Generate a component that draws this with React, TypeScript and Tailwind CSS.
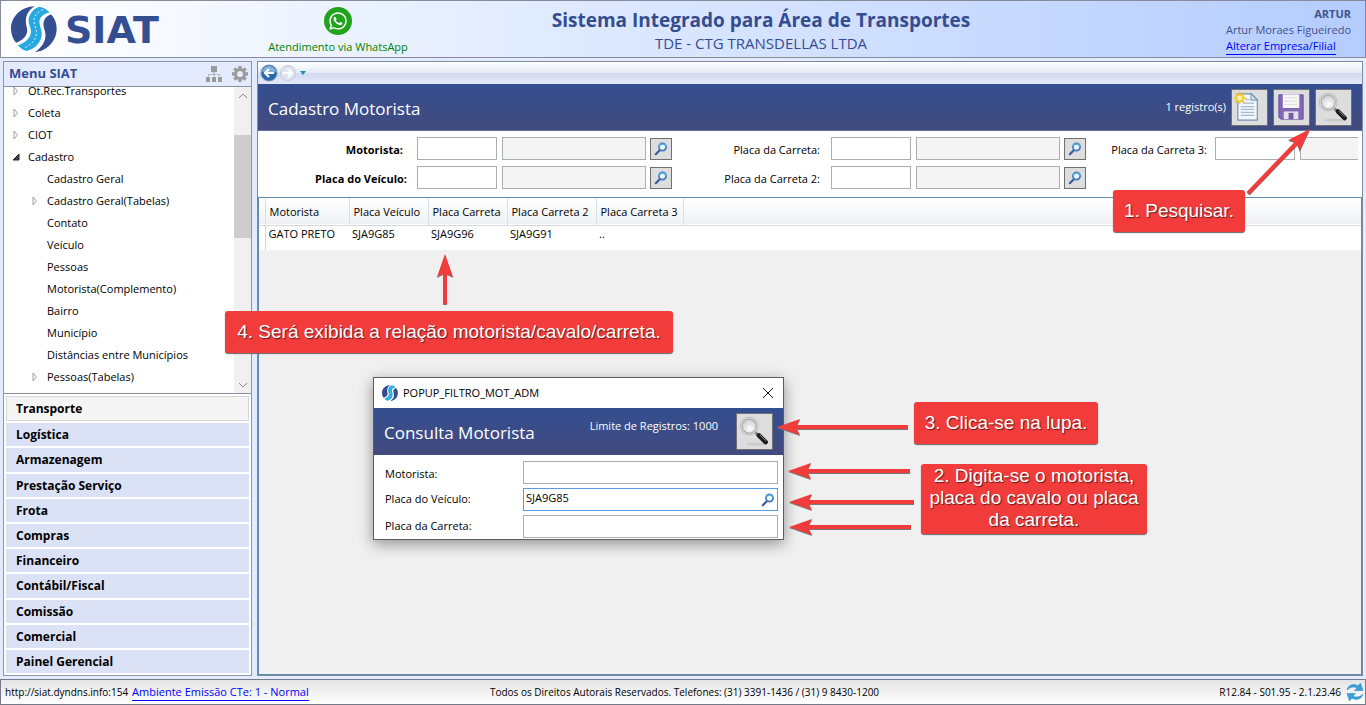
import { useState } from "react";
import { FaWhatsapp } from "react-icons/fa";

type TreeItem = { label: string; level: number; state?: "open" | "closed" };

const tree: TreeItem[] = [
  { label: "Ot.Rec.Transportes", level: 0, state: "closed" },
  { label: "Coleta", level: 0, state: "closed" },
  { label: "CIOT", level: 0, state: "closed" },
  { label: "Cadastro", level: 0, state: "open" },
  { label: "Cadastro Geral", level: 1 },
  { label: "Cadastro Geral(Tabelas)", level: 1, state: "closed" },
  { label: "Contato", level: 1 },
  { label: "Veículo", level: 1 },
  { label: "Pessoas", level: 1 },
  { label: "Motorista(Complemento)", level: 1 },
  { label: "Bairro", level: 1 },
  { label: "Município", level: 1 },
  { label: "Distâncias entre Municípios", level: 1 },
  { label: "Pessoas(Tabelas)", level: 1, state: "closed" },
];

const modulos = [
  "Transporte",
  "Logística",
  "Armazenagem",
  "Prestação Serviço",
  "Frota",
  "Compras",
  "Financeiro",
  "Contábil/Fiscal",
  "Comissão",
  "Comercial",
  "Painel Gerencial",
];

function LogoMark({ className }: { className: string }) {
  return (
    <svg viewBox="0 0 136 136" className={className} aria-hidden="true">
      <path d="M70 1C30 2 0 32 0 67c0 17 6 31 15 42 20-8 33-20 33-37 0-10-5-16-4-29C45 25 54 10 70 1z" fill="#344e92" />
      <path d="M83 2c13 2 24 9 31 17-18 4-30 14-30 28 0 12 8 22 7 37-2 24-20 42-45 49-11-4-19-9-26-17 22-6 39-21 39-41 0-13-8-20-7-34C53 24 66 8 83 2z" fill="#27aae1" />
      <path d="M119 25c10 11 16 25 16 42 0 37-29 66-64 69 18-12 30-28 31-48 0-15-7-24-6-36 1-14 9-23 23-27z" fill="#344e92" />
      <path d="M94 11C77 18 67 30 68 46c1 13 8 19 7 35-2 21-17 36-38 44" fill="none" stroke="#fff" strokeWidth="2.500" strokeDasharray="6 6" />
    </svg>
  );
}

function LupaAzul() {
  return (
    <svg viewBox="0 0 14 14" className="h-3.5 w-3.5" aria-hidden="true">
      <path d="M5.800 8.200L1.800 12.200" stroke="#3c5aa0" strokeWidth="2.200" strokeLinecap="round" />
      <circle cx="8.500" cy="5" r="3.600" fill="#eef6fc" stroke="#3d78c0" strokeWidth="1.700" />
      <path d="M5 4.800a3.600 3.600 0 0 1 7 0" fill="none" stroke="#4fb0dc" strokeWidth="1.600" />
    </svg>
  );
}

function LupaCinza() {
  return (
    <svg viewBox="0 0 36 36" className="h-full w-full" aria-hidden="true">
      <defs>
        <radialGradient id="lente" cx="55%" cy="65%">
          <stop offset="0" stopColor="#fff" />
          <stop offset="1" stopColor="#d3d3d3" />
        </radialGradient>
      </defs>
      <ellipse cx="20" cy="31" rx="11" ry="1.500" fill="#cbcbcb" />
      <path d="M18.500 18.500l4 4" stroke="#8a8a8a" strokeWidth="3" />
      <path d="M22.500 22l7 7" stroke="#1d1d1d" strokeWidth="4.600" strokeLinecap="round" />
      <path d="M23.500 21.500l6 6" stroke="#8d8d8d" strokeWidth="1" />
      <circle cx="12.500" cy="12.500" r="8" fill="url(#lente)" stroke="#a5a5a5" strokeWidth="2.600" />
      <circle cx="12.500" cy="12.500" r="8.300" fill="none" stroke="#d9d9d9" strokeWidth="1.200" />
    </svg>
  );
}

function IconeNovo() {
  return (
    <svg viewBox="0 0 36 36" className="h-full w-full" aria-hidden="true">
      <path d="M6 4h14l6 6v21H6z" fill="#f2f7fc" stroke="#6e92b5" strokeWidth="1.200" />
      <path d="M19.500 4v6.500H26z" fill="#d2e1ef" stroke="#6e92b5" />
      <path d="M14 10h4M11 13.500h12M9 17h14M9 20h14M9 23h14M9 26h14" stroke="#a3bad0" strokeWidth="1.300" />
      <path d="M8 1.500l1.300 3.600 3.600-1.700-1.700 3.600L15 8.300l-3.800 1.300 1.700 3.600-3.600-1.700L8 15l-1.300-3.500-3.600 1.700 1.700-3.600L1.500 8.300 4.800 7 3.100 3.400l3.600 1.700z" fill="#f7cf3a" stroke="#eebb28" strokeWidth=".5" />
      <circle cx="8" cy="8.200" r="2.300" fill="#fff8bd" />
    </svg>
  );
}

function IconeSalvar() {
  return (
    <svg viewBox="0 0 36 36" className="h-full w-full" aria-hidden="true">
      <path d="M5 5h25v25H7l-2-2z" fill="#8167b5" stroke="#6a519d" />
      <path d="M9 4.500h17v14H9z" fill="#f7f7f7" />
      <path d="M11 8h13M11 11.500h13M11 15h13" stroke="#dcdcdc" />
      <path d="M10 22h15v8H10z" fill="#e1e1e6" />
      <path d="M15 23.500h5V30h-5z" fill="#735aa6" />
    </svg>
  );
}

function IconeHierarquia() {
  return (
    <svg viewBox="0 0 16 16" className="h-4 w-4" fill="#9b9b9b" aria-hidden="true">
      <path d="M5 0h6v6H5zM0 11h4v5H0zM6 11h4v5H6zM12 11h4v5h-4zM7.500 6h1v2.500H14V10h-1V9H8.500v1h-1V9H3v1H2V8.500h5.500z" />
    </svg>
  );
}

function IconeEngrenagem() {
  return (
    <svg viewBox="-8 -8 16 16" className="h-4 w-4" aria-hidden="true">
      {[0, 45, 90, 135].map((a) => (
        <rect key={a} x="-1.700" y="-8" width="3.400" height="16" fill="#9b9b9b" transform={`rotate(${a})`} />
      ))}
      <circle r="6" fill="#9b9b9b" />
      <circle r="3" fill="#e5ebfe" />
    </svg>
  );
}

function IconeAtualizar() {
  return (
    <svg viewBox="0 0 18 20" className="h-5 w-[18px]" aria-hidden="true">
      <path d="M1 8c1-5 7-7 11-4l2.500-3L17 8.500H8.500L11 6C8 4 4 5 1 8z" fill="#36a0dc" stroke="#2a83bd" strokeWidth=".5" />
      <path d="M17 12c-1 5-7 7-11 4l-2.500 3L1 11.500h8.500L7 14c3 2 7 1 10-2z" fill="#36a0dc" stroke="#2a83bd" strokeWidth=".5" />
    </svg>
  );
}

function Seta({ state }: { state: "open" | "closed" }) {
  return (
    <svg viewBox="0 0 8 10" className="h-2.5 w-2" aria-hidden="true">
      {state === "open" ? (
        <path d="M7 2v6H1z" fill="#404040" stroke="#262626" />
      ) : (
        <path d="M2 1l3.500 4L2 9z" fill="#fff" stroke="#a0a0a0" />
      )}
    </svg>
  );
}

function Topo() {
  return (
    <header className="grid h-[58px] grid-cols-[240px_194px_1fr_278px] items-center border border-[#868c9c] bg-linear-to-r from-white to-[#b4ccff]">
      <div className="flex items-center gap-2 pl-2.5">
        <LogoMark className="h-[46px] w-[46px]" />
        <span className="pt-0.5 font-['DejaVu_Sans',sans-serif] text-[38px] leading-[46px] font-bold text-[#344e92]">SIAT</span>
      </div>
      <a href="#whatsapp" className="flex flex-col items-center gap-1 pt-1 text-[11px] leading-4 text-[#008000]">
        <span className="flex h-7 w-7 items-center justify-center rounded-full bg-[#22a31c] text-white">
          <FaWhatsapp size={20} />
        </span>
        Atendimento via WhatsApp
      </a>
      <div className="pt-1 text-center text-[#354c8f]">
        <h1 className="text-[19px] leading-6 font-bold">Sistema Integrado para Área de Transportes</h1>
        <p className="text-[15px] leading-[22px]">TDE - CTG TRANSDELLAS LTDA</p>
      </div>
      <div className="flex flex-col items-end pt-0.5 pr-3.5 text-[11px] leading-4 text-[#41528c]">
        <div className="flex flex-col items-start">
          <b className="self-end">ARTUR</b>
          <span>Artur Moraes Figueiredo</span>
          <a href="#empresa" className="border-b border-[#0000ff] text-[#0000ff]">Alterar Empresa/Filial</a>
        </div>
      </div>
    </header>
  );
}

function Menu() {
  return (
    <aside className="flex w-[249px] shrink-0 flex-col border border-[#9095a3] bg-white">
      <div className="flex h-[25px] shrink-0 items-center gap-2.5 border-b border-[#8b90a0] bg-[#e5ebfe] pr-[3px] pl-[5px]">
        <h2 className="grow text-[13px] font-bold text-[#354c8f]">Menu SIAT</h2>
        <button aria-label="Estrutura"><IconeHierarquia /></button>
        <button aria-label="Configurações"><IconeEngrenagem /></button>
      </div>
      <div className="flex h-[307px] shrink-0 overflow-hidden border-b border-[#8b90a0]">
        <ul className="-mt-[7px] grow text-[11px] leading-[22px]">
          {tree.map((item) => (
            <li key={item.label} className={item.level ? "flex pl-[27px]" : "flex pl-2"}>
              <span className="flex w-4 items-center">{item.state && <Seta state={item.state} />}</span>
              <a href="#menu">{item.label}</a>
            </li>
          ))}
        </ul>
        <div className="flex w-[17px] flex-col items-center bg-[#f0f0f0] text-[#8a8a8a]">
          <svg viewBox="0 0 10 6" className="my-[6px] h-1.5 w-2.5"><path d="M1 5l4-4 4 4" fill="none" stroke="currentColor" /></svg>
          <div className="mt-[30px] h-[103px] w-full bg-[#cdcdcd]" />
          <svg viewBox="0 0 10 6" className="mt-auto mb-[5px] h-1.5 w-2.5"><path d="M1 1l4 4 4-4" fill="none" stroke="currentColor" /></svg>
        </div>
      </div>
      <nav className="flex grow flex-col gap-0.5 p-0.5">
        {modulos.map((m, i) => (
          <button
            key={m}
            className={
              i === 0
                ? "grow border border-[#d5d5d5] bg-[#f5f5f5] px-[9px] pt-px text-left text-[12px] leading-4 font-bold"
                : "grow bg-[#dce2f5] px-2.5 pt-px text-left text-[12px] leading-4 font-bold"
            }
          >
            {m}
          </button>
        ))}
      </nav>
    </aside>
  );
}

type CampoProps = { id: string; label: string; labelClass: string; lupa?: boolean };

function Campo({ id, label, labelClass, lupa = true }: CampoProps) {
  return (
    <div className="flex items-center">
      <label htmlFor={id} className={`shrink-0 pt-1 text-right whitespace-nowrap ${labelClass}`}>{label}</label>
      <input id={id} className="h-[23px] w-20 shrink-0 border border-[#abadb3] bg-white px-1" />
      <input readOnly aria-label={`${label} descrição`} className="ml-[5px] h-[23px] w-36 shrink-0 border border-[#abadb3] bg-[#f4f4f4] px-1" />
      {lupa && (
        <button aria-label={`Buscar ${label}`} className="ml-1 flex h-[22px] w-[22px] shrink-0 items-center justify-center border border-[#707070] bg-[#dddddd]">
          <LupaAzul />
        </button>
      )}
    </div>
  );
}

const botao = "h-[37px] w-[37px] shrink-0 border border-[#707070] bg-[#dddddd]";

function Cadastro() {
  return (
    <main className="flex min-w-0 grow flex-col border border-[#7c8ba0] bg-[#f0f0f0]">
      <div className="flex h-[22px] shrink-0 items-center gap-px bg-[linear-gradient(to_bottom,#ffffff,#e3eaf3_50%,#d2d9ee_50%,#e4e8fb)] pl-0.5">
        <button aria-label="Voltar">
          <svg viewBox="0 0 18 18" className="h-[18px] w-[18px]">
            <circle cx="9" cy="9" r="8" fill="#2a68ad" stroke="#7596bd" />
            <path d="M2 8a7 6 0 0 1 14 0c-4 2-9-1-14 0z" fill="#83b1dd" />
            <path d="M14 9H5m4-4L5 9l4 4" fill="none" stroke="#fff" strokeWidth="2.200" />
          </svg>
        </button>
        <button aria-label="Avançar">
          <svg viewBox="0 0 18 18" className="h-[18px] w-[18px]">
            <circle cx="9" cy="9" r="7.500" fill="#e0e4ef" stroke="#c3cadb" />
            <path d="M4 9h9M9 5l4 4-4 4" fill="none" stroke="#fff" strokeWidth="2" />
          </svg>
        </button>
        <button aria-label="Histórico" className="ml-0.5">
          <svg viewBox="0 0 6 4" className="h-1 w-1.5"><path d="M0 0h6L3 4z" fill="#1f8fc0" /></svg>
        </button>
      </div>

      <div className="flex h-[47px] shrink-0 items-center gap-[5px] border-b border-[#6a70a0] bg-linear-to-b from-[#334e90] to-[#424a7e] pr-2.5 pl-2.5 text-white">
        <h2 className="grow pt-[3px] text-[17px]">Cadastro Motorista</h2>
        <span className="pt-px text-[11px]">1 registro(s)</span>
        <button aria-label="Novo" className={botao}><IconeNovo /></button>
        <button aria-label="Salvar" className={botao}><IconeSalvar /></button>
        <button aria-label="Pesquisar" className={botao}><LupaCinza /></button>
      </div>

      <form className="h-[66px] shrink-0 bg-white pt-[6px] pr-1" onSubmit={(e) => e.preventDefault()}>
        <div className="flex overflow-hidden text-[11px]">
          <div className="flex shrink-0 flex-col gap-[6px]">
            <Campo id="motorista" label="Motorista:" labelClass="w-[159px] pr-3.5 font-bold" />
            <Campo id="veiculo" label="Placa do Veículo:" labelClass="w-[159px] pr-2.5 font-bold" />
          </div>
          <div className="flex shrink-0 flex-col gap-[6px]">
            <Campo id="carreta" label="Placa da Carreta:" labelClass="w-[159px] pr-[11px]" />
            <Campo id="carreta2" label="Placa da Carreta 2:" labelClass="w-[159px] pr-[11px]" />
          </div>
          <div className="min-w-0 overflow-hidden">
            <Campo id="carreta3" label="Placa da Carreta 3:" labelClass="w-[129px] pr-2" lupa={false} />
          </div>
        </div>
      </form>

      <div className="grow border border-[#5f8bab]">
        <table className="w-full table-fixed border-collapse text-left text-[11px]">
          <colgroup>
            <col className="w-[6px]" />
            <col className="w-[84px]" />
            <col className="w-[79px]" />
            <col className="w-[79px]" />
            <col className="w-[89px]" />
            <col className="w-[87px]" />
            <col />
          </colgroup>
          <thead>
            <tr className="h-[27px] border-b border-[#d5d8dc] bg-linear-to-b from-white to-[#eff1f3]">
              <td className="border-r border-[#dcdfe2]" />
              {["Motorista", "Placa Veículo", "Placa Carreta", "Placa Carreta 2", "Placa Carreta 3"].map((c) => (
                <th key={c} className="border-r border-[#dcdfe2] pt-0.5 pl-1 font-normal whitespace-nowrap">{c}</th>
              ))}
              <td />
            </tr>
          </thead>
          <tbody>
            <tr className="h-[25px] bg-white">
              <td className="border-r border-[#d5d8dc]" />
              {["GATO PRETO", "SJA9G85", "SJA9G96", "SJA9G91", ".."].map((c) => (
                <td key={c} className="pb-[7px] pl-[3px] leading-4 whitespace-nowrap">{c}</td>
              ))}
              <td />
            </tr>
          </tbody>
        </table>
      </div>
    </main>
  );
}

function Popup() {
  const [placa, setPlaca] = useState("SJA9G85");
  const campo = "h-[23px] w-[255px] border border-[#abadb3] bg-white px-0.5";

  return (
    <section className="absolute top-[377px] left-[373px] w-[411px] border border-[#5c5c5c] bg-white text-[11px] shadow-[0_4px_14px_rgba(0,0,0,0.4)]" role="dialog" aria-label="Consulta Motorista">
      <div className="flex h-[30px] items-center gap-[5px] pr-[9px] pl-2">
        <LogoMark className="h-4 w-4" />
        <span className="grow">POPUP_FILTRO_MOT_ADM</span>
        <button aria-label="Fechar">
          <svg viewBox="0 0 12 12" className="h-3 w-3"><path d="M1 1l10 10M11 1L1 11" stroke="#111" /></svg>
        </button>
      </div>
      <div className="flex h-[47px] items-center bg-linear-to-b from-[#334e90] to-[#424a7e] pr-2.5 pl-2.5 text-white">
        <h2 className="grow pt-0.5 text-[17px]">Consulta Motorista</h2>
        <span className="mr-[18px] pb-2.5">Limite de Registros: 1000</span>
        <button aria-label="Pesquisar motorista" className={botao}><LupaCinza /></button>
      </div>
      <div className="flex flex-col gap-1 pt-[6px] pr-[5px] pb-px pl-[11px]">
        <div className="flex items-center justify-between">
          <label htmlFor="p-motorista" className="pt-1">Motorista:</label>
          <input id="p-motorista" className={campo} />
        </div>
        <div className="flex items-center justify-between">
          <label htmlFor="p-veiculo">Placa do Veículo:</label>
          <div className="flex h-[23px] w-[255px] items-center border border-[#569de5] bg-white pr-0.5">
            <input id="p-veiculo" value={placa} onChange={(e) => setPlaca(e.target.value)} className="min-w-0 grow px-0.5 pb-0.5 outline-none" />
            <LupaAzul />
          </div>
        </div>
        <div className="flex items-center justify-between">
          <label htmlFor="p-carreta">Placa da Carreta:</label>
          <input id="p-carreta" className={campo} />
        </div>
      </div>
    </section>
  );
}

const flechas = [
  { x: 1310, y: 129, len: 89, ang: 134 },
  { x: 445, y: 254, len: 50, ang: 90 },
  { x: 777, y: 427, len: 131, ang: 0 },
  { x: 788, y: 471, len: 122, ang: 0 },
  { x: 789, y: 502, len: 125, ang: 0 },
  { x: 789, y: 527, len: 122, ang: 0 },
];

const nota =
  "absolute flex items-center justify-center rounded-[3px] bg-[#f23c3c] text-center font-['Liberation_Sans',Arial,sans-serif] text-[19px] leading-[22px] text-white shadow-[0_1px_1px_#666] text-shadow-[1px_1px_1px_rgba(0,0,0,0.6)]";

function Anotacoes() {
  return (
    <>
      <svg className="pointer-events-none absolute inset-0 h-full w-full drop-shadow-[0_1px_0_#777]" aria-hidden="true">
        {flechas.map((f) => (
          <path
            key={`${f.x}-${f.y}`}
            d={`M0 0L23 -8L20 -2H${f.len}V2H20L23 8Z`}
            fill="#f23c3c"
            transform={`translate(${f.x} ${f.y}) rotate(${f.ang})`}
          />
        ))}
      </svg>
      <p className={`${nota} top-[190px] left-[1113px] h-[42px] w-[132px]`}>1. Pesquisar.</p>
      <p className={`${nota} top-[311px] left-[225px] h-[42px] w-[448px]`}>4. Será exibida a relação motorista/cavalo/carreta.</p>
      <p className={`${nota} top-[402px] left-[914px] h-[42px] w-[184px]`}>3. Clica-se na lupa.</p>
      <p className={`${nota} top-[464px] left-[921px] h-[70px] w-[226px] px-2 pb-0.5`}>2. Digita-se o motorista, placa do cavalo ou placa da carreta.</p>
    </>
  );
}

function Rodape() {
  return (
    <footer className="grid h-[26px] grid-cols-[1fr_auto_1fr] items-center border border-[#757a88] bg-linear-to-b from-[#e4e4e4] to-white pr-px pl-1 text-[10px]">
      <div className="flex items-center gap-1">
        <span>http://siat.dyndns.info:154</span>
        <a href="#ambiente" className="border-b border-[#0000ff] pt-px text-[11px] leading-4 text-[#0000ff]">Ambiente Emissão CTe: 1 - Normal</a>
      </div>
      <span>Todos os Direitos Autorais Reservados. Telefones: (31) 3391-1436 / (31) 9 8430-1200</span>
      <div className="flex items-center justify-end gap-[5px]">
        <span>R12.84 - S01.95 - 2.1.23.46</span>
        <button aria-label="Atualizar"><IconeAtualizar /></button>
      </div>
    </footer>
  );
}

export default function App() {
  return (
    <div className="relative flex min-h-screen flex-col overflow-hidden bg-[#e3ebff] font-['Open_Sans','Noto_Sans',sans-serif] text-black">
      <Topo />
      <div className="flex grow gap-[5px] p-[3px]">
        <Menu />
        <Cadastro />
      </div>
      <Rodape />
      <Popup />
      <Anotacoes />
    </div>
  );
}
